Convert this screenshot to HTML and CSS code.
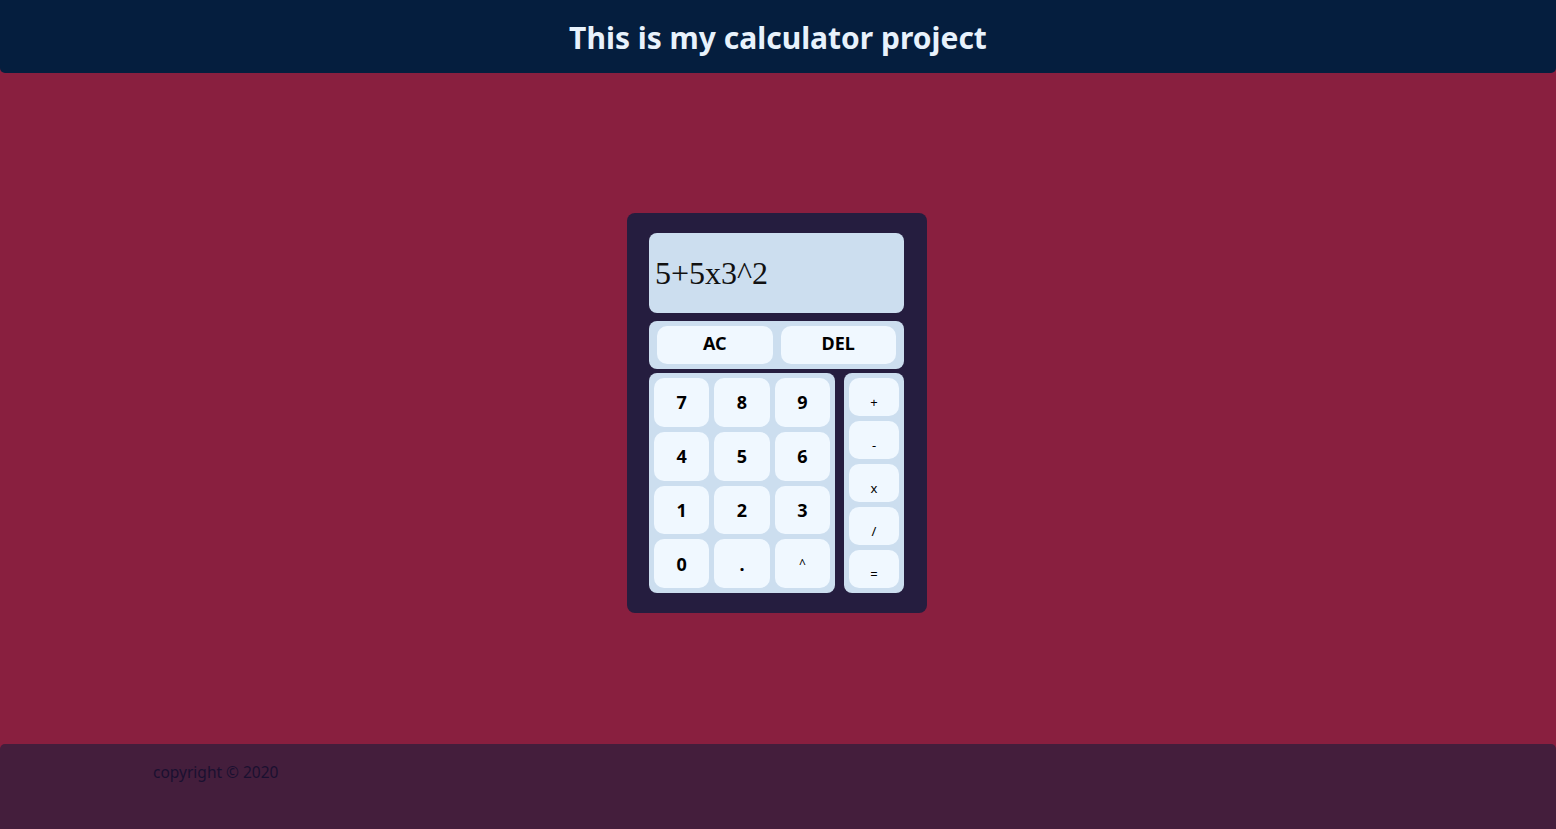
FILE: index.html
```html
<!DOCTYPE html>
<html lang="en">
<head>
<meta charset="utf-8">
<title>Calculator</title>
<link rel="stylesheet" href="styles.css">
</head>
<body>
<header class="top">
  <h1 class="title">This is my calculator project</h1>
</header>
<main class="stage">
  <div class="calc">
    <div class="display">5+5x3^2</div>
    <div class="controls">
      <button class="key key-ctl">AC</button>
      <button class="key key-ctl">DEL</button>
    </div>
    <div class="pads">
      <div class="numpad">
        <button class="key key-num">7</button>
        <button class="key key-num">8</button>
        <button class="key key-num">9</button>
        <button class="key key-num">4</button>
        <button class="key key-num">5</button>
        <button class="key key-num">6</button>
        <button class="key key-num">1</button>
        <button class="key key-num">2</button>
        <button class="key key-num">3</button>
        <button class="key key-num">0</button>
        <button class="key key-num">.</button>
        <button class="key key-small">^</button>
      </div>
      <div class="ops">
        <button class="key key-op">+</button>
        <button class="key key-op">-</button>
        <button class="key key-op">x</button>
        <button class="key key-op">/</button>
        <button class="key key-op">=</button>
      </div>
    </div>
  </div>
</main>
<footer class="bottom">
  <p class="copy">copyright © 2020</p>
</footer>
</body>
</html>
```

FILE: styles.css
```css
* { box-sizing: border-box; }

html, body {
  margin: 0;
  padding: 0;
  height: 100%;
}

body {
  background: #891f3f;
  font-family: "Noto Sans", "Open Sans", sans-serif;
  display: flex;
  flex-direction: column;
  min-height: 829px;
}

.top {
  height: 73px;
  background: #051e3e;
  border-radius: 0 0 5px 5px;
  display: flex;
  align-items: center;
  justify-content: center;
  padding-top: 2px;
}

.title {
  margin: 0;
  color: #e8f2fc;
  font-size: 30px;
  font-weight: 700;
}

.stage {
  flex: 1;
  display: flex;
  justify-content: center;
  align-items: flex-start;
  padding-top: 140px;
}

.calc {
  width: 300px;
  height: 400px;
  margin-right: 2px;
  background: #251d3f;
  border-radius: 8px;
  padding: 20px 23px 20px 22px;
  display: flex;
  flex-direction: column;
}

.display {
  height: 80px;
  background: #ccdeef;
  border-radius: 8px;
  display: flex;
  align-items: center;
  padding-left: 6px;
  font-family: "Liberation Serif", "Times New Roman", serif;
  font-size: 32px;
  color: #111;
}

.controls {
  margin-top: 8px;
  height: 48px;
  background: #ccdeef;
  border-radius: 8px;
  padding: 5px 8px;
  display: grid;
  grid-template-columns: 1fr 1fr;
  gap: 8px;
}

.pads {
  margin-top: 4px;
  display: flex;
  gap: 9px;
  height: 220px;
}

.numpad {
  width: 186px;
  background: #ccdeef;
  border-radius: 8px;
  padding: 5px;
  display: grid;
  grid-template-columns: repeat(3, 1fr);
  grid-template-rows: repeat(4, 1fr);
  gap: 5px;
}

.ops {
  width: 60px;
  background: #ccdeef;
  border-radius: 8px;
  padding: 5px;
  display: grid;
  grid-template-rows: repeat(5, 1fr);
  gap: 5px;
}

.key {
  border: none;
  margin: 0;
  padding: 0;
  background: #f0f8ff;
  border-radius: 10px;
  color: #000;
  font-family: "Noto Sans", "Open Sans", sans-serif;
}

.key-ctl {
  font-size: 18px;
  font-weight: 700;
  padding-bottom: 4px;
}

.key-num {
  font-size: 18px;
  font-weight: 700;
}

.key-small {
  font-size: 12px;
}

.key-op {
  font-size: 13px;
  padding-top: 9px;
}

.bottom {
  height: 85px;
  background: #441e3c;
  border-radius: 5px 5px 0 0;
  padding: 17px 0 0 153px;
}

.copy {
  margin: 0;
  font-size: 15.5px;
  color: #1a1030;
}
```
